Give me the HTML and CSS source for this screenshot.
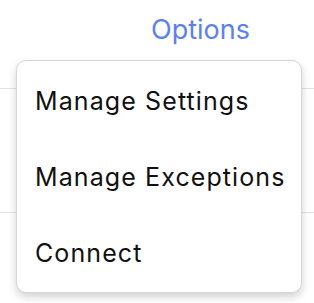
FILE: index.html
```html
<!DOCTYPE html>
<html>
<head>
<meta charset="utf-8">
<link rel="stylesheet" href="styles.css">
</head>
<body>
<div class="page">
  <div class="toolbar"><span class="options">Options</span></div>
  <div class="list">
    <div class="row row-a"></div>
    <div class="row row-b"></div>
  </div>
  <div class="menu">
    <div class="item">Manage Settings</div>
    <div class="item">Manage Exceptions</div>
    <div class="item item-last">Connect</div>
  </div>
</div>
</body>
</html>
```
FILE: styles.css
```css
html, body {
  margin: 0;
  padding: 0;
  background: #ffffff;
}
body {
  font-family: Inter, "Noto Sans", "Liberation Sans", sans-serif;
  -webkit-font-smoothing: antialiased;
}
.page {
  position: relative;
  width: 314px;
  height: 303px;
  overflow: hidden;
}
.toolbar {
  height: 60px;
  display: flex;
  justify-content: flex-end;
  align-items: center;
  padding-right: 64px;
  box-sizing: border-box;
}
.options {
  color: #5b80f4;
  font-size: 27px;
  line-height: 32px;
  padding-top: 0;
}
.list .row {
  border-bottom: 1px solid #e2e2e2;
}
.row-a { height: 28px; }
.row-b { height: 123px; }
.menu {
  position: absolute;
  left: 16px;
  top: 60px;
  width: 286px;
  height: 233px;
  box-sizing: border-box;
  background: #ffffff;
  border: 1px solid #d6d6d6;
  border-radius: 10px;
  box-shadow: 0 4px 8px rgba(0, 0, 0, 0.18);
  display: flex;
  flex-direction: column;
  padding-top: 2px;
}
.item {
  height: 76px;
  display: flex;
  align-items: center;
  padding-left: 18px;
  font-size: 25px;
  letter-spacing: 1.1px;
  color: #111111;
  box-sizing: border-box;
}
.item-last { height: 76px; }
```
